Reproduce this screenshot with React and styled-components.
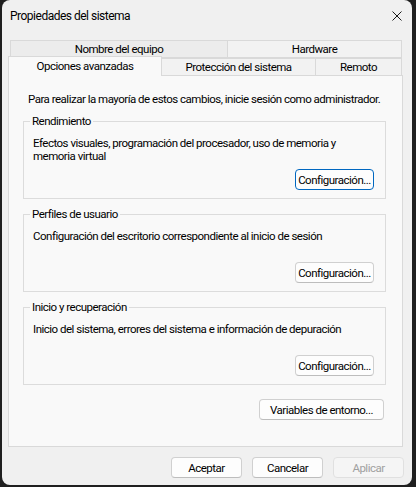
import React from "react";
import styled, { createGlobalStyle } from "styled-components";

const GlobalStyle = createGlobalStyle`
  html, body {
    margin: 0;
    padding: 0;
    background: #1f1f1f;
  }
  body {
    font-family: Roboto, "Liberation Sans", sans-serif;
    font-size: 11.5px;
    letter-spacing: -0.5px;
    color: #000;
  }
`;

const Window = styled.div`
  margin-left: 2px;
  width: 410px;
  height: 485px;
  background: #f0f0f0;
  border-radius: 8px;
  display: flex;
  flex-direction: column;
  overflow: hidden;
`;

const TitleBar = styled.div`
  height: 32px;
  display: flex;
  align-items: center;
  justify-content: space-between;
  padding: 0 10px 0 8px;
  flex-shrink: 0;
`;

const Title = styled.span`
  font-size: 12px;
`;

const Body = styled.div`
  padding: 8px 8px 0 6px;
  display: flex;
  flex-direction: column;
`;

const Tabs = styled.div`
  width: 394px;
  display: flex;
  flex-direction: column;
`;

const TabRow = styled.div`
  display: flex;
  align-items: flex-end;
  height: 18px;
  padding-left: ${(p) => p.$indent || 0}px;
`;

const Tab = styled.div`
  box-sizing: border-box;
  width: ${(p) => p.$w}px;
  height: ${(p) => (p.$active ? 20 : 18)}px;
  margin-left: -1px;
  display: flex;
  align-items: center;
  justify-content: center;
  border: 1px solid #d9d9d9;
  border-bottom: ${(p) => (p.$active ? "none" : "1px solid #d9d9d9")};
  background: ${(p) => (p.$active ? "#f9f9f9" : p.$dim ? "#ececec" : "#f2f2f2")};
  position: relative;
  z-index: ${(p) => (p.$active ? 2 : 0)};
  padding-bottom: ${(p) => (p.$active ? 2 : 0)}px;
  &:first-child {
    margin-left: 0;
  }
`;

const Panel = styled.div`
  box-sizing: border-box;
  width: 395px;
  height: 372px;
  margin-top: -1px;
  background: #f9f9f9;
  border: 1px solid #d9d9d9;
  padding: 16px 16px 0 14px;
  display: flex;
  flex-direction: column;
  gap: 8px;
`;

const Intro = styled.p`
  margin: 0 0 -1px 5px;
  line-height: 15px;
  white-space: nowrap;
`;

const Group = styled.fieldset`
  box-sizing: border-box;
  margin: 0;
  min-width: 0;
  padding: 8px 11px 8px 9px;
  border: 1px solid #dcdcdc;
`;

const Legend = styled.legend`
  padding: 0 2px;
  margin-left: -3px;
  line-height: 15px;
`;

const GroupBody = styled.div`
  height: 53px;
  display: flex;
  flex-direction: column;
`;

const GroupText = styled.p`
  margin: 0;
  line-height: 13px;
  max-width: 330px;
`;

const Button = styled.button`
  box-sizing: border-box;
  width: ${(p) => p.$w}px;
  height: 21px;
  padding: 0;
  font-family: inherit;
  font-size: inherit;
  letter-spacing: inherit;
  color: ${(p) => (p.disabled ? "#a0a0a0" : "#000")};
  background: ${(p) => (p.disabled ? "#f5f5f5" : "#fdfdfd")};
  border: 1px solid ${(p) => (p.$focus ? "#0067c0" : p.disabled ? "#e0e0e0" : "#d0d0d0")};
  border-bottom-color: ${(p) => (p.$focus ? "#0067c0" : p.disabled ? "#e0e0e0" : "#bdbdbd")};
  border-radius: 4px;
  box-shadow: ${(p) => (p.$focus ? "inset 0 0 0 1px #fdfdfd" : "none")};
`;

const GroupButton = styled(Button)`
  margin-top: auto;
  align-self: flex-end;
`;

const EnvButton = styled(Button)`
  margin-top: 6px;
  margin-right: 2px;
  align-self: flex-end;
`;

const Footer = styled.div`
  display: flex;
  justify-content: flex-end;
  gap: 10px;
  margin-top: 10px;
  width: 396px;
`;

const CloseIcon = () => (
  <svg width="10" height="10" viewBox="0 0 10 10">
    <path d="M0.5 0.5L9.5 9.5M9.5 0.5L0.5 9.5" stroke="#1a1a1a" strokeWidth="1" />
  </svg>
);

const groups = [
  {
    title: "Rendimiento",
    text: "Efectos visuales, programación del procesador, uso de memoria y memoria virtual",
    focus: true,
  },
  {
    title: "Perfiles de usuario",
    text: "Configuración del escritorio correspondiente al inicio de sesión",
  },
  {
    title: "Inicio y recuperación",
    text: "Inicio del sistema, errores del sistema e información de depuración",
  },
];

export default function App() {
  return (
    <>
      <GlobalStyle />
      <Window>
        <TitleBar>
          <Title>Propiedades del sistema</Title>
          <CloseIcon />
        </TitleBar>
        <Body>
          <Tabs>
            <TabRow $indent={2}>
              <Tab $w={218} $dim>Nombre del equipo</Tab>
              <Tab $w={175}>Hardware</Tab>
            </TabRow>
            <TabRow>
              <Tab $w={154} $active>Opciones avanzadas</Tab>
              <Tab $w={155}>Protección del sistema</Tab>
              <Tab $w={87}>Remoto</Tab>
            </TabRow>
          </Tabs>
          <Panel>
            <Intro>Para realizar la mayoría de estos cambios, inicie sesión como administrador.</Intro>
            {groups.map((g) => (
              <Group key={g.title}>
                <Legend>{g.title}</Legend>
                <GroupBody>
                  <GroupText>{g.text}</GroupText>
                  <GroupButton $w={79} $focus={g.focus}>Configuración...</GroupButton>
                </GroupBody>
              </Group>
            ))}
            <EnvButton $w={125}>Variables de entorno...</EnvButton>
          </Panel>
          <Footer>
            <Button $w={71}>Aceptar</Button>
            <Button $w={71}>Cancelar</Button>
            <Button $w={71} disabled>Aplicar</Button>
          </Footer>
        </Body>
      </Window>
    </>
  );
}
